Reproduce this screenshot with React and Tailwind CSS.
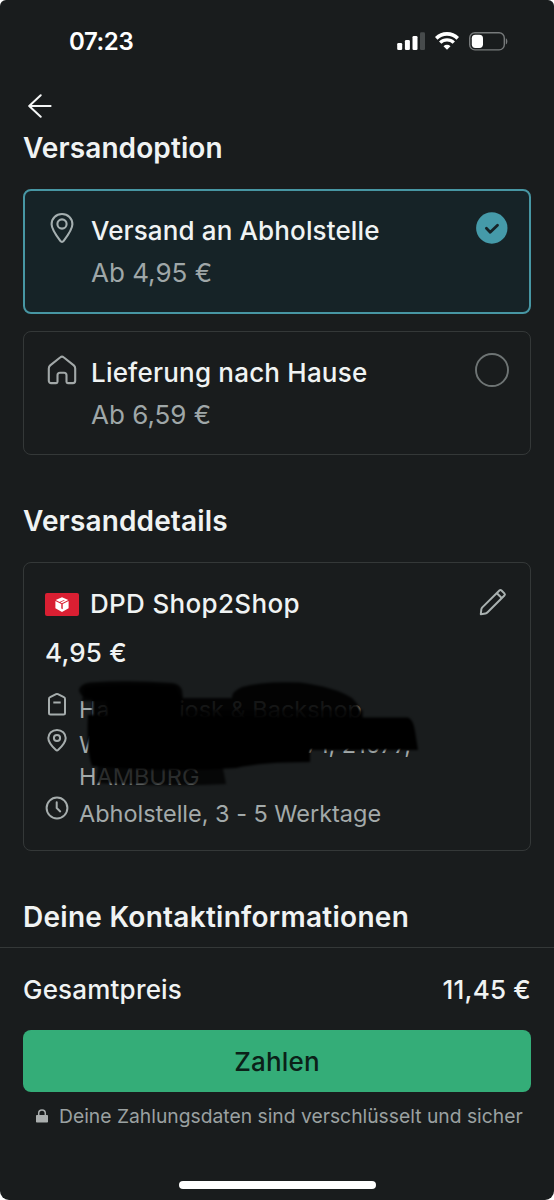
import { useState } from 'react'

const OPTIONS = [
  { id: 'pickup', title: 'Versand an Abholstelle', price: 'Ab 4,95 €', tracking: 'tracking-[0.13px]' },
  { id: 'home', title: 'Lieferung nach Hause', price: 'Ab 6,59 €', tracking: 'tracking-[0.2px]' },
]

function SignalIcon() {
  return (
    <svg width="28" height="18" viewBox="0 0 28 18" fill="#fff">
      <rect x="0.2" y="11" width="5" height="7" rx="1.3" />
      <rect x="7.9" y="8" width="5" height="10" rx="1.3" />
      <rect x="15.5" y="4" width="5" height="14" rx="1.3" />
      <rect x="23" y="0.2" width="5" height="17.8" rx="1.3" fill="#474b4c" />
    </svg>
  )
}

function WifiIcon() {
  return (
    <svg width="24" height="18" viewBox="0 0 24 18" fill="none" stroke="#fff">
      <path d="M1.2 6.300a15.600 15.600 0 0 1 21.600 0" strokeWidth="3.700" />
      <path d="M5.200 10.600a9.800 9.800 0 0 1 13.600 0" strokeWidth="3.400" />
      <path d="M12 17.800l-3.500-3.500a5 5 0 0 1 7 0z" fill="#fff" stroke="none" />
    </svg>
  )
}

function BatteryIcon() {
  return (
    <svg width="39" height="19" viewBox="0 0 39 19">
      <rect x="0.7" y="0.7" width="34.6" height="17.2" rx="5.2" fill="none" stroke="#777a7b" strokeWidth="1.4" />
      <rect x="2.8" y="2.7" width="11.2" height="13.2" rx="3.6" fill="#fff" />
      <path d="M36.8 6.2c2.1 1 2.1 5.2 0 6.2z" fill="#777a7b" />
    </svg>
  )
}

function ArrowLeftIcon() {
  return (
    <svg width="24" height="24" viewBox="0 0 24 24" fill="none" stroke="#f4f6f6" strokeWidth="2" strokeLinecap="round" strokeLinejoin="round">
      <path d="M12.7 1.2L1.2 12l11.5 10.8M1.4 12h21.2" />
    </svg>
  )
}

function PinIcon() {
  return (
    <svg width="32" height="32" viewBox="0 0 32 32" fill="none" stroke="#a5afb0" strokeWidth="2.1" strokeLinejoin="round">
      <path d="M16 2c-6 0-10.400 4.500-10.400 10.200 0 4.100 1.900 7.700 8.900 16.900a1.900 1.900 0 0 0 3 0c7-9.200 8.900-12.800 8.900-16.900C26.400 6.500 22 2 16 2z" />
      <circle cx="16" cy="12" r="4.6" />
    </svg>
  )
}

function HomeIcon() {
  return (
    <svg width="32" height="32" viewBox="0 0 32 32" fill="none" stroke="#a2a8a8" strokeWidth="2.1" strokeLinejoin="round">
      <path d="M2.800 14.400c0-1.200.5-2.200 1.400-3L14.400 3.300a2.500 2.500 0 0 1 3.200 0l10.200 8.100c.9.800 1.400 1.800 1.400 3v12.400c0 1.300-1 2.300-2.300 2.300h-5.100c-.8 0-1.300-.5-1.300-1.300v-6.500c0-1.500-1-2.500-2.500-2.500h-4c-1.500 0-2.500 1-2.500 2.500v6.500c0 .8-.5 1.300-1.300 1.300H5.100a2.300 2.300 0 0 1-2.300-2.300z" />
    </svg>
  )
}

function PencilIcon() {
  return (
    <svg width="28" height="28" viewBox="0 0 28 28" fill="none" stroke="#a9b1b0" strokeWidth="2" strokeLinejoin="round">
      <path d="M1.800 26.200l.5-4.700c.1-.8.500-1.500 1-2.100L20.400 2.500a1.500 1.500 0 0 1 2.100 0l2.900 2.900a1.500 1.500 0 0 1 0 2.100L8.600 24.300c-.6.600-1.300 1-2.100 1.100z" />
      <path d="M17.900 5.200l4.800 4.800" />
    </svg>
  )
}

function DpdLogo() {
  return (
    <svg width="34" height="23" viewBox="0 0 34 23">
      <rect width="34" height="23" rx="2" fill="#d91f32" />
      <path d="M17 4.200l6.300 2.900L17 10.300l-1.500-.8 4.300-2.200-.8-.4-4.400 2.200-3.900-2z" fill="#fff" />
      <path d="M10.400 8l5.900 3.100v4.500l1.400.7v-5.200L23.600 8v7.300L17 19l-6.600-3.700z" fill="#fff" />
    </svg>
  )
}

function ShopIcon() {
  return (
    <svg width="24" height="24" viewBox="0 0 24 24" fill="none" stroke="#a6adad" strokeWidth="2" strokeLinejoin="round">
      <path d="M4 6.900c0-.8.4-1.400 1.100-1.700l6-3a2 2 0 0 1 1.800 0l6 3c.7.300 1.100.9 1.100 1.700v14.200c0 .9-.6 1.500-1.500 1.500h-13c-.9 0-1.500-.6-1.500-1.500z" />
      <path d="M8.300 10.500h7.400" />
    </svg>
  )
}

function SmallPinIcon() {
  return (
    <svg width="24" height="24" viewBox="0 0 24 24" fill="none" stroke="#a6adad" strokeWidth="2" strokeLinejoin="round">
      <path d="M12 1.900c-4.900 0-8.700 3.700-8.700 8.100 0 3.900 2.500 7.200 7.400 11.800.8.700 1.800.7 2.600 0 4.900-4.600 7.400-7.900 7.400-11.800 0-4.400-3.800-8.100-8.700-8.100z" />
      <circle cx="12" cy="10" r="3.100" />
    </svg>
  )
}

function ClockIcon() {
  return (
    <svg width="24" height="24" viewBox="0 0 24 24" fill="none" stroke="#a6adad" strokeWidth="2" strokeLinecap="round" strokeLinejoin="round">
      <circle cx="12" cy="12" r="10.400" />
      <path d="M11.700 6.200v5.900l3.500 3.300" />
    </svg>
  )
}

function LockIcon() {
  return (
    <svg width="12" height="14" viewBox="0 0 12 14">
      <path d="M2.700 7V4.300a3.300 3.300 0 0 1 6.600 0V7" fill="none" stroke="#aaaeae" strokeWidth="1.500" />
      <rect y="6" width="12" height="7.600" rx="0.800" fill="#aaaeae" />
    </svg>
  )
}

function Radio({ checked }) {
  if (checked) {
    return (
      <svg width="34" height="34" viewBox="0 0 34 34">
        <circle cx="16.800" cy="17" r="15.700" fill="#459aa9" />
        <path d="M11.400 17.300l3.800 3.900 7.300-7" fill="none" stroke="#162327" strokeWidth="2.800" strokeLinecap="round" strokeLinejoin="round" />
      </svg>
    )
  }
  return (
    <svg width="34" height="34" viewBox="0 0 34 34">
      <circle cx="17" cy="17" r="16" fill="none" stroke="#6e7474" strokeWidth="1.900" />
    </svg>
  )
}

// Black marker strokes over the pickup address
function Marker() {
  return (
    <svg className="pointer-events-none absolute left-0 top-0" width="350" height="112" viewBox="74 680 350 112">
      <defs>
        <filter id="soft" x="-5%" y="-5%" width="110%" height="110%">
          <feGaussianBlur stdDeviation="1" />
        </filter>
      </defs>
      <g filter="url(#soft)">
        <path d="M79 692Q79 685 90 683.500Q130 681 172 684Q180 685 182 691L183 699H232Q231 693 242 688Q262 682 300 683.500Q335 688 352 699Q362 708 363 722H92V700Q82 700 79 692z" fill="#000" opacity="0.87" />
        <path d="M84 688Q120 684 176 687L182 699L181 722H108L106 702H82z" fill="#000" opacity="0.8" />
        <path d="M183 711H363V722H183z" fill="#000" opacity="0.6" />
        <path d="M98 764H222L226 785Q170 788 96 784z" fill="#000" opacity="0.740" />
        <path d="M88 716L363 718.500H408Q413 720 415 732L418 751H310V763Q262 763 236 769Q170 774 92 767Q86 750 88 716z" fill="#000" />
      </g>
    </svg>
  )
}

export default function App() {
  const [selected, setSelected] = useState('pickup')

  return (
    <div className="w-[554px] h-[1200px] bg-white">
      <div className="flex h-full flex-col overflow-hidden rounded-t-[6px] rounded-b-[9px] bg-[#191c1d] font-['Inter',sans-serif] text-[#f0f3f3]">
        {/* Status bar */}
        <div className="flex h-[82px] shrink-0 items-center pl-[69px] pr-[46px]">
          <span className="flex-1 pt-[2px] text-[24px] font-semibold tracking-[-0.4px] text-white">07:23</span>
          <div className="flex items-center gap-[10px]">
            <SignalIcon />
            <WifiIcon />
            <BatteryIcon />
          </div>
        </div>

        <div className="flex h-12 shrink-0 items-start pl-[28px] pt-3">
          <button aria-label="Zurück">
            <ArrowLeftIcon />
          </button>
        </div>

        {/* Scrolled content */}
        <main className="flex h-[817px] shrink-0 flex-col px-[23px]">
          <h2 className="h-9 shrink-0 text-[28px] font-semibold leading-9 tracking-[0.1px]">Versandoption</h2>

          <div className="mt-[23px] flex shrink-0 flex-col gap-[17px]">
            {OPTIONS.map((option) => {
              const active = option.id === selected
              return (
                <div
                  key={option.id}
                  onClick={() => setSelected(option.id)}
                  className={
                    active
                      ? 'flex h-[125px] rounded-[8px] border-2 border-[#4796a3] bg-[#162327] pl-[21px] pr-[20px] pt-[18px]'
                      : 'flex h-[124px] rounded-[8px] border border-[#343838] pl-[22px] pr-[21px] pt-[19px]'
                  }
                >
                  <div className="mt-[3px] w-[45px] shrink-0">
                    {option.id === 'pickup' ? <PinIcon /> : <HomeIcon />}
                  </div>
                  <div className="flex-1 text-[26px] leading-[43px]">
                    <p className={`font-medium ${option.tracking}`}>{option.title}</p>
                    <p className="-mt-px text-[#9fa7a8]">{option.price}</p>
                  </div>
                  <div className="mt-[2px]">
                    <Radio checked={active} />
                  </div>
                </div>
              )
            })}
          </div>

          <h2 className="mt-12 h-9 shrink-0 text-[28px] font-semibold leading-9 tracking-[0.15px]">Versanddetails</h2>

          <div className="mt-[23px] h-[289px] shrink-0 rounded-[8px] border border-[#343838] px-[21px] pt-[17px]">
            <div className="flex h-12 items-center">
              <DpdLogo />
              <p className="ml-[11px] flex-1 text-[26px] font-medium leading-[48px] tracking-[0.33px]">DPD Shop2Shop</p>
              <div className="mr-[2px] -mt-[5px]">
                <PencilIcon />
              </div>
            </div>
            <p className="pt-px text-[26px] font-medium leading-[48px] tracking-[0.2px]">4,95 €</p>

            <div className="relative mt-[14px] text-[23.5px] text-[#a3aaaa]">
              <div className="flex h-[37px]">
                <div className="mt-[1px] w-[34px] shrink-0"><ShopIcon /></div>
                <p className="flex w-[283px] justify-between leading-[37px]"><span>Ha</span><span>iosk &amp; Backshop</span></p>
              </div>
              <div className="flex h-[67px]">
                <div className="w-[34px] shrink-0"><SmallPinIcon /></div>
                <div className="w-[332px] pt-px leading-8">
                  <p className="flex justify-between"><span>W</span><span>71, 21077,</span></p>
                  <p>HAMBURG</p>
                </div>
              </div>
              <div className="flex">
                <div className="mt-[1px] w-[34px] shrink-0"><ClockIcon /></div>
                <p className="pt-px leading-9 tracking-[-0.02px]">Abholstelle, 3 - 5 Werktage</p>
              </div>
              <div className="absolute left-[29px] -top-[12px]">
                <Marker />
              </div>
            </div>
          </div>

          <h2 className="mt-12 h-9 shrink-0 text-[28px] font-semibold leading-9 tracking-[0.27px]">Deine Kontaktinformationen</h2>
        </main>

        {/* Payment footer */}
        <footer className="flex flex-1 flex-col border-t border-[#343838] px-[23px]">
          <div className="flex h-[82px] items-center justify-between pt-px text-[26px] font-medium tracking-[0.2px]">
            <span>Gesamtpreis</span>
            <span>11,45 €</span>
          </div>
          <button className="h-[62px] rounded-[8px] bg-[#34ad78] text-[26px] font-medium tracking-[0.2px] text-[#0b2118]">
            Zahlen
          </button>
          <div className="mt-[6px] flex h-9 items-center pl-[13px]">
            <LockIcon />
            <p className="ml-[11px] whitespace-nowrap text-[19.3px] text-[#9ba1a1]">
              Deine Zahlungsdaten sind verschlüsselt und sicher
            </p>
          </div>
          <div className="mx-auto mt-auto mb-[11px] h-2 w-[197px] rounded-full bg-white" />
        </footer>
      </div>
    </div>
  )
}
